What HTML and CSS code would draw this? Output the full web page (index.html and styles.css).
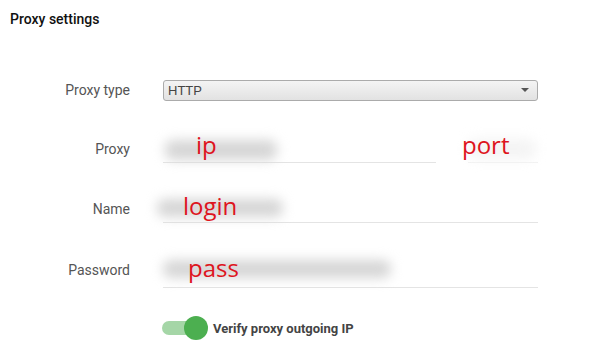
FILE: index.html
```html
<!DOCTYPE html>
<html lang="en">
<head>
  <meta charset="UTF-8">
  <title>Proxy settings</title>
  <link rel="stylesheet" href="styles.css">
</head>
<body>
<div class="panel">
  <h3 class="panel-title">Proxy settings</h3>

  <div class="form">
    <div class="row">
      <label class="row-label">Proxy type</label>
      <div class="row-field">
        <div class="select">
          <span>HTTP</span>
          <span class="caret"></span>
        </div>
      </div>
    </div>

    <div class="row row-proxy">
      <label class="row-label">Proxy</label>
      <div class="row-field split">
        <div class="input input-ip">
          <span class="blur blur-ip"></span>
          <span class="mark mark-ip">ip</span>
        </div>
        <div class="input input-port">
          <span class="blur blur-port"></span>
          <span class="mark mark-port">port</span>
        </div>
      </div>
    </div>

    <div class="row row-name">
      <label class="row-label">Name</label>
      <div class="row-field">
        <div class="input">
          <span class="blur blur-name"></span>
          <span class="mark mark-name">login</span>
        </div>
      </div>
    </div>

    <div class="row">
      <label class="row-label">Password</label>
      <div class="row-field">
        <div class="input input-pass">
          <span class="blur blur-pass"></span>
          <span class="mark mark-pass">pass</span>
        </div>
      </div>
    </div>

    <div class="row row-toggle">
      <span class="row-label"></span>
      <div class="row-field toggle-line">
        <span class="toggle"><span class="knob"></span></span>
        <span class="toggle-text">Verify proxy outgoing IP</span>
      </div>
    </div>
  </div>
</div>
</body>
</html>
```

FILE: styles.css
```css
* {
  margin: 0;
  padding: 0;
  box-sizing: border-box;
}

body {
  background: #fff;
  font-family: Roboto, "Liberation Sans", Arial, sans-serif;
  color: #222;
}

.panel {
  width: 593px;
  height: 364px;
  overflow: hidden;
}

.panel-title {
  font-size: 14px;
  font-weight: 500;
  color: #111;
  padding: 11px 10px 0;
  height: 60px;
}

/* Строки формы */
.row {
  display: flex;
  align-items: center;
  height: 60px;
}

.row-proxy {
  height: 57px;
}

.row-name {
  height: 63px;
}

.row-toggle {
  height: 56px;
}

.row-label {
  width: 130px;
  text-align: right;
  font-size: 14px;
  color: #555;
  flex-shrink: 0;
}

.row-field {
  width: 375px;
  margin-left: 33px;
}

.split {
  display: flex;
  justify-content: space-between;
}

/* Select */
.select {
  display: flex;
  align-items: center;
  justify-content: space-between;
  height: 21px;
  padding: 0 8px 0 4px;
  border: 1px solid #ababab;
  border-radius: 3px;
  background: linear-gradient(#f4f4f4, #e2e2e2);
  font-family: "Liberation Sans", Arial, sans-serif;
  font-size: 13px;
  color: #444;
}

.caret {
  width: 0;
  height: 0;
  border-left: 4px solid transparent;
  border-right: 4px solid transparent;
  border-top: 4px solid #555;
}

/* Поля ввода */
.input {
  position: relative;
  height: 28px;
  border-bottom: 1px solid #e4e4e4;
}

.input-ip {
  width: 273px;
}

.input-port {
  width: 70px;
  border-bottom-color: #f2f2f2;
}

.input-pass {
  height: 32px;
  margin-top: 4px;
}

.blur {
  position: absolute;
  background: #d6d6d6;
  filter: blur(6px);
  border-radius: 8px;
}

.blur-ip {
  left: 2px;
  top: 5px;
  width: 112px;
  height: 20px;
}

.blur-port {
  left: 0;
  top: 4px;
  width: 68px;
  height: 20px;
  background: #f4f4f4;
}

.blur-name {
  left: -6px;
  top: 4px;
  width: 126px;
  height: 18px;
}

.blur-pass {
  left: 0;
  top: 4px;
  width: 228px;
  height: 18px;
}

.mark {
  position: absolute;
  font-family: "Open Sans", "Liberation Sans", sans-serif;
  font-size: 24px;
  line-height: 1;
  color: #de1420;
}

.mark-ip {
  left: 33px;
  top: -2px;
}

.mark-port {
  left: -6px;
  top: -2px;
}

.mark-name {
  left: 20px;
  top: -1px;
}

.mark-pass {
  left: 25px;
  top: 0;
}

/* Переключатель */
.toggle-line {
  display: flex;
  align-items: center;
}

.toggle {
  position: relative;
  display: block;
  width: 36px;
  height: 14px;
  border-radius: 7px;
  background: #a5d6a7;
  margin-left: -1px;
}

.knob {
  position: absolute;
  right: -10px;
  top: -5px;
  width: 24px;
  height: 24px;
  border-radius: 50%;
  background: #4caf50;
}

.toggle-text {
  margin-left: 15px;
  font-size: 13px;
  font-weight: 700;
  color: #444;
}
```
